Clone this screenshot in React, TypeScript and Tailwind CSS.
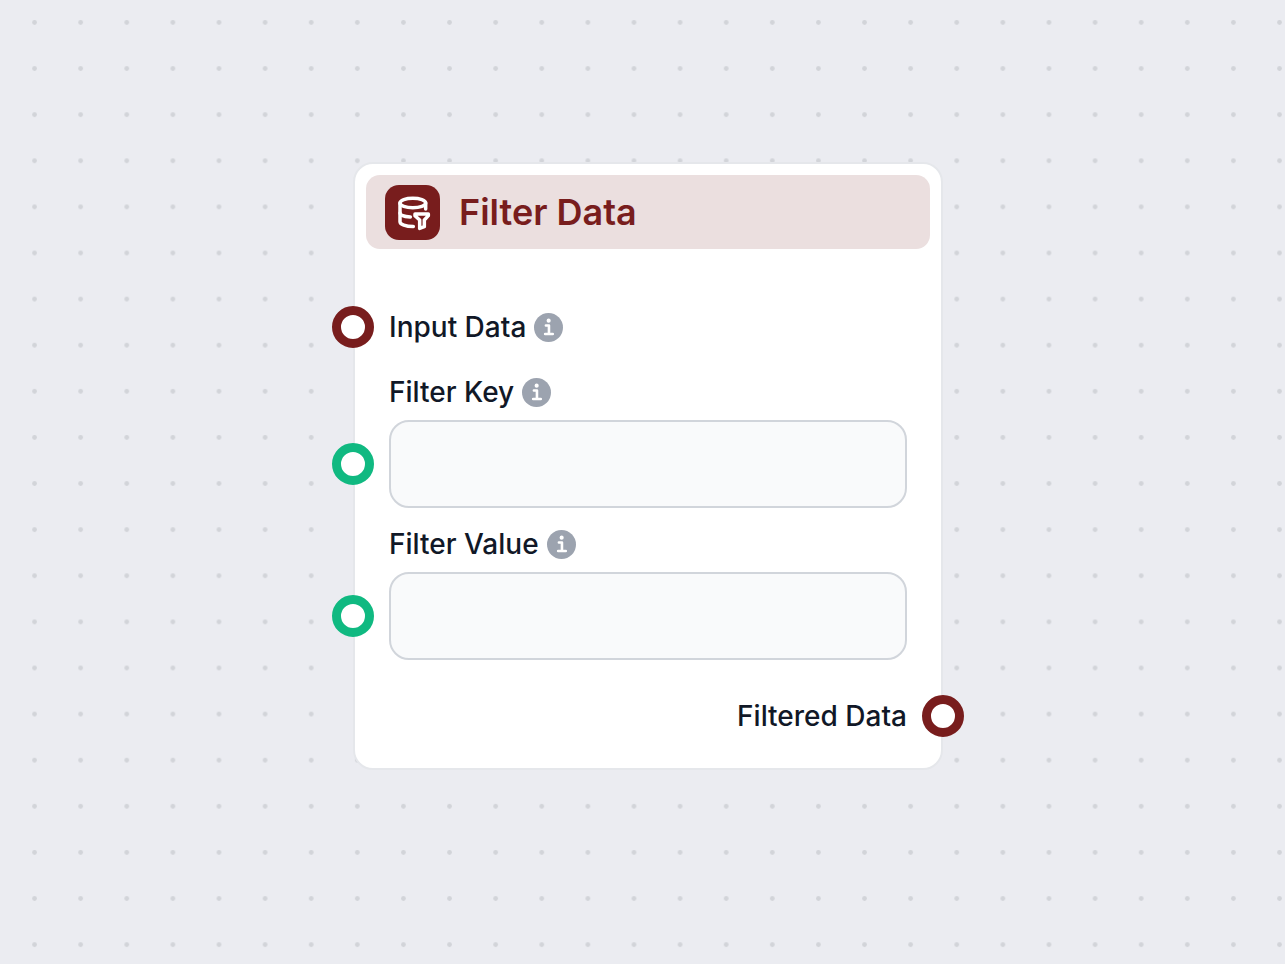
import type { ReactNode } from "react";

const DotGrid = () => {
  return (
    <svg className="absolute inset-0 h-full w-full" aria-hidden="true">
      <defs>
        <pattern
          id="dots"
          x="11.5"
          y="-0.6"
          width="46.11"
          height="46.11"
          patternUnits="userSpaceOnUse"
        >
          <circle cx="23.05" cy="23.05" r="2.4" fill="#d2d4d9" />
        </pattern>
      </defs>
      <rect width="100%" height="100%" fill="url(#dots)" />
    </svg>
  );
};

const DatabaseFilterIcon = () => {
  return (
    <svg
      viewBox="0 0 165 165"
      className="h-[55px] w-[55px]"
      fill="none"
      stroke="white"
      strokeWidth="10.5"
      strokeLinecap="round"
      strokeLinejoin="round"
      aria-hidden="true"
    >
      <ellipse cx="83.5" cy="54" rx="38.5" ry="14" />
      <path d="M45 54v56c0 8 17 14.5 40 14.5" />
      <path d="M45 84c0 6 12 11 31 12" />
      <path d="M122 54v18" />
      <path d="M90 87h40v5l-12 13v20l-14 5v-25l-14-13z" />
    </svg>
  );
};

const InfoIcon = () => {
  return (
    <svg viewBox="0 0 19 19" className="h-[29px] w-[29px]" aria-hidden="true">
      <circle cx="9.5" cy="9.5" r="9.5" fill="#9ca3af" />
      <circle cx="9.6" cy="5" r="1.35" fill="white" />
      <path
        d="M7.8 8.2h2v5.6M7.3 13.8h5"
        fill="none"
        stroke="white"
        strokeWidth="1.7"
        strokeLinecap="round"
        strokeLinejoin="round"
      />
    </svg>
  );
};

const InfoButton = ({ label }: { label: string }) => {
  return (
    <button type="button" aria-label={label} className="cursor-pointer">
      <InfoIcon />
    </button>
  );
};

// Connection points sit on the card's border, centred on their row
const InputHandle = ({ className }: { className: string }) => {
  return (
    <span
      className={`absolute top-1/2 -left-[57px] h-[42px] w-[42px] -translate-y-1/2 rounded-full border-[9px] bg-white ${className}`}
    />
  );
};

const OutputHandle = ({ className }: { className: string }) => {
  return (
    <span
      className={`absolute top-1/2 -right-[57px] h-[42px] w-[42px] -translate-y-1/2 rounded-full border-[9px] bg-white ${className}`}
    />
  );
};

const Row = ({ children }: { children: ReactNode }) => {
  return <div className="relative flex h-10 items-center gap-2">{children}</div>;
};

const Field = ({ id, label }: { id: string; label: string }) => {
  return (
    <div className="flex flex-col gap-2">
      <Row>
        <label htmlFor={id}>{label}</label>
        <InfoButton label={`About ${label}`} />
      </Row>
      <div className="relative">
        <InputHandle className="border-[#10b981]" />
        <input
          id={id}
          type="text"
          className="block h-[88px] w-full rounded-[20px] border-2 border-[#d1d5db] bg-[#f9fafb] px-6"
        />
      </div>
    </div>
  );
};

export default function App() {
  return (
    <main className="relative flex min-h-screen items-start justify-center bg-[#ebecf1] pt-[162px] pb-16 pl-[11px] font-['Inter',sans-serif]">
      <DotGrid />
      <section className="relative w-full max-w-[590px] rounded-[20px] border-2 border-[#e5e7eb] bg-white p-[11px]">
        <header className="flex h-[74px] items-center gap-[19px] rounded-[14px] bg-[#ebdfdf] px-[19px]">
          <div className="rounded-[14px] bg-[#781d1d]">
            <DatabaseFilterIcon />
          </div>
          <h1 className="text-[36px] leading-[48px] font-semibold text-[#781d1d]">
            Filter Data
          </h1>
        </header>
        <div className="px-[23px] pt-[58px] pb-[21px] text-[28px] leading-10 font-medium text-[#111827]">
          <div className="mb-[25px]">
            <Row>
              <InputHandle className="border-[#781d1d]" />
              <span>Input Data</span>
              <InfoButton label="About Input Data" />
            </Row>
          </div>
          <div className="mb-9 flex flex-col gap-4">
            <Field id="filter-key" label="Filter Key" />
            <Field id="filter-value" label="Filter Value" />
          </div>
          <div className="relative flex h-10 items-center justify-end">
            <span>Filtered Data</span>
            <OutputHandle className="border-[#781d1d]" />
          </div>
        </div>
      </section>
    </main>
  );
}
